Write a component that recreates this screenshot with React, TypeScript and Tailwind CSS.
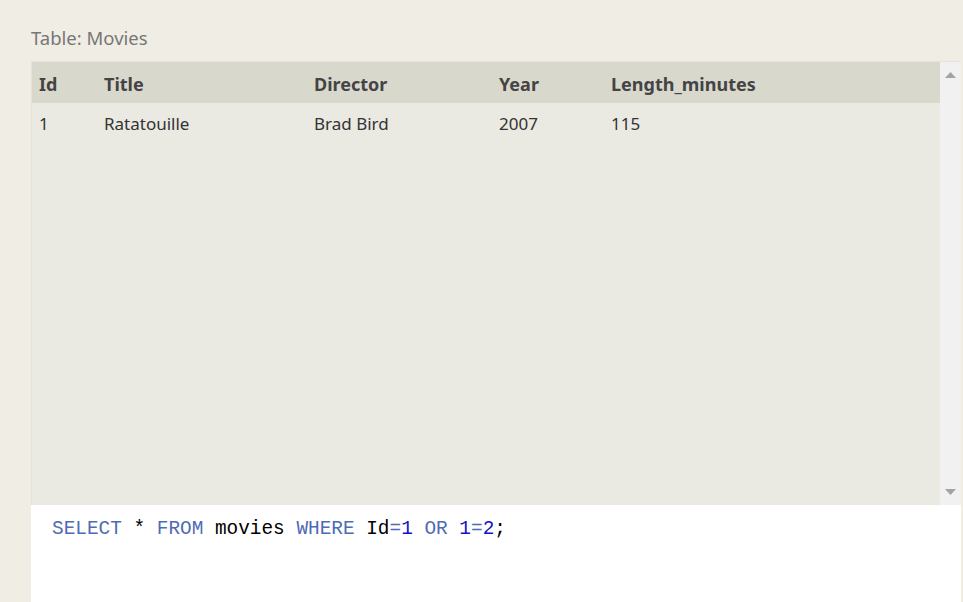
import React from "react";

const columns = [
	{ key: "id", label: "Id", width: "w-[65px]" },
	{ key: "title", label: "Title", width: "w-[210px]" },
	{ key: "director", label: "Director", width: "w-[185px]" },
	{ key: "year", label: "Year", width: "w-[112px]" },
	{ key: "length", label: "Length_minutes", width: "flex-1" }
];

const rows = [
	{ id: "1", title: "Ratatouille", director: "Brad Bird", year: "2007", length: "115" }
];

function Scrollbar() {
	return (
		<div className="w-[21px] bg-[#f1f1f1] flex flex-col justify-between items-center py-[10px]">
			<svg width="11" height="6" viewBox="0 0 11 6">
				<polygon points="5.5,0 11,6 0,6" fill="#a3a3a3" />
			</svg>
			<svg width="11" height="6" viewBox="0 0 11 6">
				<polygon points="0,0 11,0 5.5,6" fill="#a3a3a3" />
			</svg>
		</div>
	);
}

export default function App() {
	return (
		<div className="h-screen overflow-hidden bg-[#f0ede5] pl-[31px] pr-[2px] pt-[26px] font-['Noto_Sans',sans-serif]">
			<div className="text-[18.5px] leading-[24px] text-[#777]">Table: Movies</div>
			<div className="mt-[11px] border-t border-l border-[#e4e2da] flex h-[444px]">
				<div className="flex-1 bg-[#eae9e2] text-[#333]">
					<div className="flex h-[41px] items-center pt-[3px] bg-[#d9d8cd] text-[18px] font-bold text-[#444]">
						{columns.map(col => (
							<div key={col.key} className={`${col.width} pl-[7px]`}>{col.label}</div>
						))}
					</div>
					{rows.map(row => (
						<div key={row.id} className="flex h-[42px] items-center text-[17px]">
							{columns.map(col => (
								<div key={col.key} className={`${col.width} pl-[7px]`}>
									{row[col.key as keyof typeof row]}
								</div>
							))}
						</div>
					))}
				</div>
				<Scrollbar />
			</div>
			<div className="h-[120px] bg-white pl-[21px] pt-[11px] font-['Liberation_Mono',monospace] text-[19.4px] leading-[26px] text-black">
				<span className="text-[#4e6bb5]">SELECT</span>{" "}
				<span>*</span>{" "}
				<span className="text-[#4e6bb5]">FROM</span>{" "}
				<span>movies</span>{" "}
				<span className="text-[#4e6bb5]">WHERE</span>{" "}
				<span>Id</span>
				<span className="text-[#4e6bb5]">=</span>
				<span className="text-[#1212c8]">1</span>{" "}
				<span className="text-[#4e6bb5]">OR</span>{" "}
				<span className="text-[#1212c8]">1</span>
				<span className="text-[#4e6bb5]">=</span>
				<span className="text-[#1212c8]">2</span>
				<span>;</span>
			</div>
		</div>
	);
}
